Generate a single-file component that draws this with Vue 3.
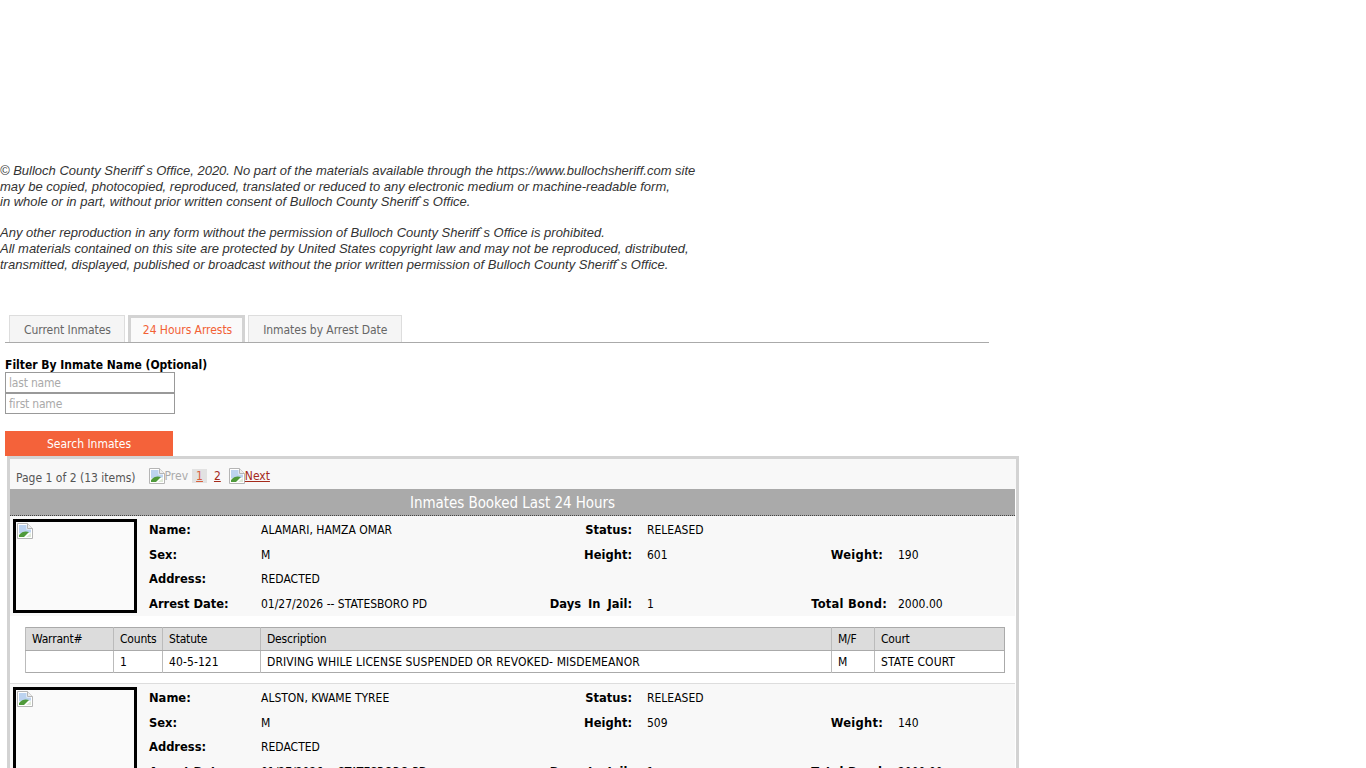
<script setup>
const tabs = [
  { label: 'Current Inmates', active: false },
  { label: '24 Hours Arrests', active: true },
  { label: 'Inmates by Arrest Date', active: false },
]
const columns = ['Warrant#', 'Counts', 'Statute', 'Description', 'M/F', 'Court']
const inmates = [
  {
    name: 'ALAMARI, HAMZA OMAR', status: 'RELEASED', sex: 'M', height: '601', weight: '190',
    date: '01/27/2026 -- STATESBORO PD', days: '1', bond: '2000.00',
    charges: [['', '1', '40-5-121', 'DRIVING WHILE LICENSE SUSPENDED OR REVOKED- MISDEMEANOR', 'M', 'STATE COURT']],
  },
  {
    name: 'ALSTON, KWAME TYREE', status: 'RELEASED', sex: 'M', height: '509', weight: '140',
    date: '01/27/2026 -- STATESBORO PD', days: '1', bond: '2000.00',
    charges: [],
  },
]
</script>

<template>
  <div class="page">
    <svg width="0" height="0" class="defs" aria-hidden="true">
      <symbol id="broken" viewBox="0 0 16 16">
        <path d="M.5.5H10.5L15.5 5.5V15.5H.5Z" fill="#fff" stroke="#b5b5b5" />
        <path d="M2 2H9.5V6.5H14V9.5L2 10.5Z" fill="#bcd3f0" />
        <path d="M2 14V12C5 8 9 8 12 9L7 14Z" fill="#4f9a3b" />
        <path d="M9 14L14 10V14Z" fill="#dfe9d8" />
        <path d="M10.5.5V5.5H15.5" fill="#eee" stroke="#b5b5b5" />
      </symbol>
    </svg>

    <div class="copyright">
      <p>© Bulloch County Sheriff`s Office, 2020. No part of the materials available through the https://www.bullochsheriff.com site<br>may be copied, photocopied, reproduced, translated or reduced to any electronic medium or machine-readable form,<br>in whole or in part, without prior written consent of Bulloch County Sheriff`s Office.</p>
      <p>Any other reproduction in any form without the permission of Bulloch County Sheriff`s Office is prohibited.<br>All materials contained on this site are protected by United States copyright law and may not be reproduced, distributed,<br>transmitted, displayed, published or broadcast without the prior written permission of Bulloch County Sheriff`s Office.</p>
    </div>

    <div class="tabs">
      <a v-for="t in tabs" :key="t.label" class="tab" :class="{ active: t.active }">{{ t.label }}</a>
    </div>

    <div class="filter">
      <div class="filter-label">Filter By Inmate Name (Optional)</div>
      <input class="field" placeholder="last name">
      <input class="field" placeholder="first name">
      <button class="search">Search Inmates</button>
    </div>

    <section class="panel">
      <div class="pager">
        <span class="count">Page 1 of 2 (13 items)</span>
        <span class="nav muted"><svg class="bi"><use href="#broken" /></svg>Prev</span>
        <span class="num current">1</span>
        <a class="num">2</a>
        <a class="nav link"><svg class="bi"><use href="#broken" /></svg><span class="under">Next</span></a>
      </div>
      <h2 class="heading">Inmates Booked Last 24 Hours</h2>

      <article v-for="p in inmates" :key="p.name" class="record">
        <div class="info">
          <div class="photo"><svg class="bi"><use href="#broken" /></svg></div>
          <div class="facts">
            <b>Name:</b><span>{{ p.name }}</span><b class="r">Status:</b><span>{{ p.status }}</span><b class="r"></b><span></span>
            <b>Sex:</b><span>{{ p.sex }}</span><b class="r">Height:</b><span>{{ p.height }}</span><b class="r wide">Weight:</b><span>{{ p.weight }}</span>
            <b>Address:</b><span>REDACTED</span><b class="r"></b><span></span><b class="r"></b><span></span>
            <b>Arrest Date:</b><span>{{ p.date }}</span><b class="r days">Days In Jail:</b><span>{{ p.days }}</span><b class="r wide bond">Total Bond:</b><span>{{ p.bond }}</span>
          </div>
        </div>
        <div v-if="p.charges.length" class="charges">
          <table>
            <thead>
              <tr><th v-for="c in columns" :key="c">{{ c }}</th></tr>
            </thead>
            <tbody>
              <tr v-for="(row, i) in p.charges" :key="i">
                <td v-for="(v, j) in row" :key="j">{{ v }}</td>
              </tr>
            </tbody>
          </table>
        </div>
      </article>
    </section>
  </div>
</template>

<style scoped>
.page {
  height: 768px;
  overflow: hidden;
  padding-top: 163px;
  box-sizing: border-box;
  font-family: "DejaVu Sans Condensed", "DejaVu Sans", sans-serif;
  font-stretch: condensed;
  font-size: 12px;
  color: #000;
  background: #fff;
}
.defs { position: absolute; }
.copyright {
  font-family: "Liberation Sans", Arial, sans-serif;
  font-stretch: normal;
  font-style: italic;
  font-size: 13px;
  line-height: 15.67px;
  color: #333;
}
.copyright p { margin: 0 0 15.3px; }
.tabs {
  display: flex;
  gap: 3px;
  width: 984px;
  margin: 42.7px 0 0 5px;
  padding-left: 4px;
  box-sizing: border-box;
  height: 28px;
  border-bottom: 1px solid #aaa;
}
.tab {
  box-sizing: border-box;
  height: 27px;
  padding: 0 13.4px 0 14px;
  line-height: 28px;
  letter-spacing: -0.05px;
  color: #666;
  background: #f5f5f5;
  border: 1px solid #ddd;
  border-bottom: 0;
}
.tab.active {
  color: #f26135;
  background: #fafafa;
  border: 3px solid #d3d3d3;
  border-bottom: 0;
  line-height: 24px;
  padding: 0 10px 0 11.6px;
}
.filter { margin-left: 5px; }
.filter-label {
  font-weight: 700;
  font-size: 12px;
  line-height: 14px;
  margin-top: 15px;
}
.field {
  display: block;
  box-sizing: border-box;
  width: 170px;
  height: 21px;
  padding: 1px 3px 0;
  border: 1px solid #999;
  font: inherit;
  outline: 0;
}
.field::placeholder { color: #aaa; letter-spacing: -0.2px; }
.search {
  display: block;
  box-sizing: border-box;
  width: 168px;
  height: 25px;
  margin-top: 17px;
  border: 0;
  background: #f4623a;
  color: #fff;
  font: inherit;
}
.panel {
  box-sizing: border-box;
  width: 1012px;
  margin-left: 7px;
  padding: 0 1px 0 0;
  border: 3px solid #d3d3d3;
  border-bottom: 0;
  background: #fff;
}
.pager {
  display: flex;
  align-items: center;
  height: 30px;
  background: #f8f8f8;
  padding: 6px 0 0 6px;
  box-sizing: border-box;
  margin-right: -1px;
  color: #555;
}
.count { margin: 2px 13px 0 0; }
.bi { width: 16px; height: 16px; display: inline-block; vertical-align: top; }
.nav { display: inline-flex; align-items: center; margin-top: -2px; }
.muted { color: #aaa; }
.link { color: #a52a1a; }
.under { text-decoration: underline; }
.num {
  margin: -2px 0 0 4px;
  padding: 0 3px;
  color: #a52a1a;
  text-decoration: underline;
}
.num.current { background: #e2e2e2; color: #d9603c; padding: 0 4px; }
.num + .link { margin-left: 5px; }
.heading {
  margin: 0;
  height: 27px;
  box-sizing: border-box;
  border-bottom: 1px dotted #444;
  background: #aaa;
  color: #fff;
  font-weight: 400;
  font-size: 15px;
  letter-spacing: -0.05px;
  line-height: 28px;
  text-align: center;
}
.record { border-bottom: 1px solid #ddd; padding-bottom: 10px; }
.info { display: flex; background: #f8f8f8; padding-left: 3px; }
.photo {
  box-sizing: border-box;
  width: 124px;
  height: 94px;
  margin: 3px 0;
  flex: none;
  border: 3px solid #000;
  background: #fafafa;
  padding: 1px 0 0 1px;
}
.facts {
  display: grid;
  grid-template-columns: 112px 286px 100px 151px 100px 1fr;
  grid-auto-rows: 24.5px;
  margin-left: 12px;
  padding-top: 2px;
  align-items: center;
  flex: 1;
}
.facts b {
  font-family: "DejaVu Sans", sans-serif;
  font-stretch: normal;
  font-weight: 700;
  font-size: 11.5px;
}
.facts .r { text-align: right; padding-right: 15px; white-space: nowrap; }
.facts .days { word-spacing: 3px; }
.facts .wide { letter-spacing: 0.25px; }
.facts .bond { padding-right: 11px; }
.charges { padding: 11px 0 0 15px; background: #fff; }
table {
  width: 980px;
  table-layout: fixed;
  border-collapse: collapse;
  border: 1px solid #aaa;
  font-size: 12px;
}
th, td {
  box-sizing: border-box;
  border-left: 1px solid #bbb;
  padding: 0 6px;
  text-align: left;
  font-weight: 400;
  white-space: nowrap;
}
th {
  height: 23px;
  background: #dcdcdc;
  border-bottom: 1px solid #aaa;
  letter-spacing: -0.2px;
}
td { height: 22px; background: #fff; letter-spacing: 0.1px; }
th:nth-child(1) { width: 88px; }
th:nth-child(2) { width: 49px; }
th:nth-child(3) { width: 98px; }
th:nth-child(4) { width: 571px; }
th:nth-child(5) { width: 43px; }
</style>

<style>
html, body { overflow: hidden; }
</style>
